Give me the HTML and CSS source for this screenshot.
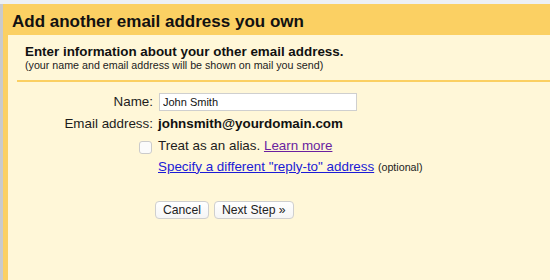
FILE: index.html
```html
<!DOCTYPE html>
<html>
<head>
<meta charset="utf-8">
<link rel="stylesheet" href="styles.css">
</head>
<body>
<div class="frame">
  <div class="panel">
    <div class="header">Add another email address you own</div>
    <div class="intro">
      <div class="intro-title">Enter information about your other email address.</div>
      <div class="intro-sub">(your name and email address will be shown on mail you send)</div>
    </div>
    <div class="rule"></div>
    <div class="form">
      <div class="label">Name:</div>
      <div class="value"><input class="text-input" type="text" value="John Smith"></div>
      <div class="label">Email address:</div>
      <div class="value strong">johnsmith@yourdomain.com</div>
      <div class="label"><input class="check" type="checkbox"></div>
      <div class="value">Treat as an alias. <a class="visited" href="#">Learn more</a></div>
      <div class="label"></div>
      <div class="value"><a class="link" href="#">Specify a different "reply-to" address</a> <span class="optional">(optional)</span></div>
    </div>
    <div class="buttons">
      <button class="btn">Cancel</button>
      <button class="btn">Next Step »</button>
    </div>
  </div>
</div>
</body>
</html>
```

FILE: styles.css
```css
html, body {
  margin: 0;
  padding: 0;
  height: 100%;
}
body {
  background: #edf0f4;
  font-family: "Liberation Sans", Arial, sans-serif;
  color: #1c1c1c;
  overflow: hidden;
}
.frame {
  margin-top: 4px;
  height: calc(100% - 4px);
  border-left: 3px solid #c9cacd;
  box-sizing: border-box;
}
.panel {
  height: 100%;
  background: #fff7d8;
  border-left: 5px solid #fbd063;
  box-sizing: border-box;
}
.header {
  background: #fbd063;
  height: 31px;
  box-sizing: border-box;
  padding: 8px 0 0 4px;
  font-size: 17px;
  font-weight: bold;
  line-height: 20px;
  color: #111;
}
.intro {
  padding: 9px 0 0 17px;
}
.intro-title {
  font-size: 13.4px;
  font-weight: bold;
  line-height: 15px;
  color: #111;
}
.intro-sub {
  font-size: 10.7px;
  line-height: 12px;
  color: #222;
}
.rule {
  margin: 9px 0 0 9px;
  height: 2px;
  background: #fbd063;
}
.form {
  margin-top: 9px;
  display: grid;
  grid-template-columns: 145px 1fr;
  grid-template-rows: 22px 22px 21px 21px;
  column-gap: 5px;
  align-items: center;
  font-size: 13.4px;
}
.label {
  text-align: right;
  line-height: 22px;
  display: flex;
  justify-content: flex-end;
  align-items: center;
  height: 100%;
}
.value {
  line-height: 22px;
  white-space: nowrap;
}
.strong {
  font-weight: bold;
  color: #111;
}
.text-input {
  width: 198px;
  height: 18px;
  box-sizing: border-box;
  border: 1px solid #cfcfcf;
  background: #fff;
  font-family: "Liberation Sans", Arial, sans-serif;
  font-size: 11px;
  padding: 0 3px;
  margin: 0 0 0 1px;
  vertical-align: middle;
  color: #111;
  outline: none;
}
.check {
  -webkit-appearance: none;
  appearance: none;
  width: 13px;
  height: 13px;
  margin: 3px 1px 0 0;
  border: 1px solid #cbcbcb;
  border-radius: 3px;
  background: #fbfbfb;
  box-sizing: border-box;
}
.visited {
  color: #6a1fa0;
  text-decoration: underline;
}
.link {
  color: #1b1bd6;
  text-decoration: underline;
}
.optional {
  font-size: 10.7px;
  color: #222;
}
.buttons {
  margin: 24px 0 0 147px;
  display: flex;
  gap: 5px;
}
.btn {
  height: 18px;
  padding: 0 7px;
  font-family: "Liberation Sans", Arial, sans-serif;
  font-size: 12.2px;
  line-height: 16px;
  color: #222;
  background: linear-gradient(#ffffff, #f5f5f5);
  border: 1px solid #cfcfcf;
  border-radius: 4px;
  box-sizing: border-box;
}
```
